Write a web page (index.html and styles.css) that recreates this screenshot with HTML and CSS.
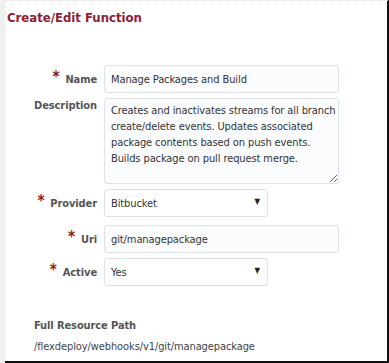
FILE: index.html
```html
<!DOCTYPE html>
<html lang="en">

<head>
    <meta charset="UTF-8">
    <meta name="viewport" content="width=device-width, initial-scale=1.0">
    <title>Create/Edit Function</title>
    <link rel="stylesheet" href="styles.css">
</head>

<body>
    <div class="frame">
        <div class="edge"></div>
        <div class="panel">
            <h1 class="title">Create/Edit Function</h1>

            <div class="form">
                <label class="label"><span class="req">*</span>Name</label>
                <input class="field" type="text" value="Manage Packages and Build">

                <label class="label top">Description</label>
                <textarea class="field area">Creates and inactivates streams for all branch create/delete events. Updates associated package contents based on push events. Builds package on pull request merge.</textarea>

                <label class="label"><span class="req">*</span>Provider</label>
                <div class="select-wrap">
                    <select class="field select">
                        <option>Bitbucket</option>
                    </select>
                </div>

                <label class="label uri"><span class="req">*</span>Uri</label>
                <input class="field uri" type="text" value="git/managepackage">

                <label class="label"><span class="req">*</span>Active</label>
                <div class="select-wrap">
                    <select class="field select">
                        <option>Yes</option>
                    </select>
                </div>
            </div>

            <div class="resource">
                <div class="resource-label">Full Resource Path</div>
                <div class="resource-path">/flexdeploy/webhooks/v1/git/managepackage</div>
            </div>
        </div>
    </div>
</body>

</html>
```

FILE: styles.css
```css
* {
    margin: 0;
    padding: 0;
    box-sizing: border-box;
}

body {
    background-color: #fff;
    font-family: "DejaVu Sans Condensed", "DejaVu Sans", sans-serif;
    font-stretch: condensed;
    font-size: 11px;
    letter-spacing: -0.1px;
    color: #333;
}

.frame {
    width: 389px;
    height: 363px;
    display: flex;
}

.edge {
    width: 5px;
    flex-shrink: 0;
    background: repeating-conic-gradient(#e4e4e4 0 25%, #fff 0 50%) 0 0 / 2px 2px;
}

.panel {
    flex-grow: 1;
    border-top: 1px dotted #e0e0e0;
    border-right: 2px solid #111;
    border-bottom: 2px solid #111;
    padding-top: 9px;
}

.title {
    font-size: 13px;
    line-height: 16px;
    font-weight: bold;
    letter-spacing: 0;
    color: #8a2236;
    padding-left: 2px;
}

.form {
    display: grid;
    grid-template-columns: 92px 235px;
    column-gap: 7px;
    row-gap: 5px;
    margin-top: 39px;
}

.label {
    display: flex;
    justify-content: flex-end;
    align-items: center;
    font-weight: bold;
    color: #555;
    line-height: 13px;
}

.label.top {
    align-items: flex-start;
    padding-top: 1px;
}

.req {
    color: #8b1a1a;
    font-size: 15px;
    margin-right: 6px;
    position: relative;
    top: -2px;
}

.field {
    width: 100%;
    height: 28px;
    border: 1px solid #dde2e8;
    border-radius: 3px;
    background-color: #fbfcfe;
    padding: 0 6px;
    font-family: inherit;
    font-stretch: condensed;
    font-size: 11px;
    letter-spacing: -0.1px;
    color: #333;
    outline: none;
}

.field.uri,
.label.uri {
    margin-top: 3px;
}

.area {
    height: 86px;
    padding: 4px 0 4px 6px;
    line-height: 16px;
    overflow: hidden;
    resize: vertical;
}

.select-wrap {
    position: relative;
    width: 164px;
}

.select {
    appearance: none;
    -webkit-appearance: none;
    background-color: #fff;
}

.select-wrap::after {
    content: '\25BC';
    position: absolute;
    right: 8px;
    top: 8px;
    font-size: 8px;
    color: #222;
    pointer-events: none;
}

.resource {
    padding-left: 29px;
    margin-top: 33px;
}

.resource-label {
    font-weight: bold;
    color: #555;
    line-height: 13px;
}

.resource-path {
    margin-top: 8px;
    color: #444;
    line-height: 13px;
}
```
